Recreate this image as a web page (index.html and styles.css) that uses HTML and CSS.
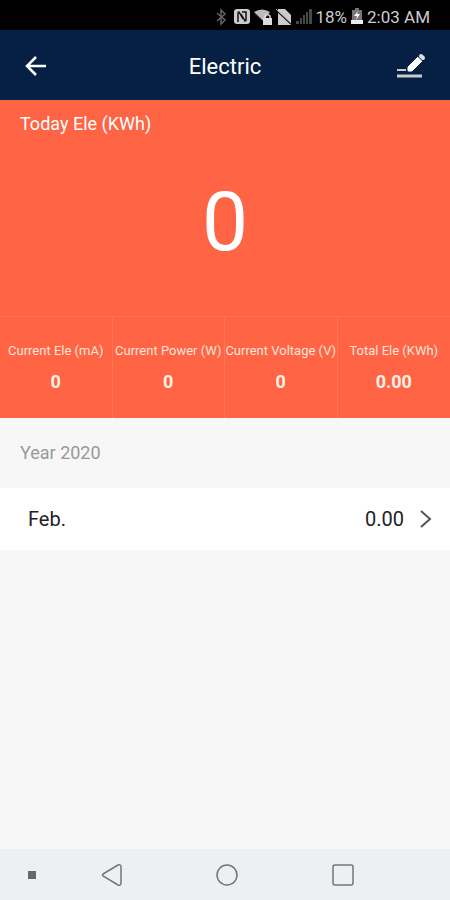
FILE: index.html
```html
<!DOCTYPE html>
<html lang="en">
<head>
<meta charset="utf-8">
<meta name="viewport" content="width=device-width, initial-scale=1">
<title>Electric</title>
<link rel="stylesheet" href="styles.css">
</head>
<body>
<div class="app">
  <div class="status">
    <svg class="bluetooth" width="12" height="18" viewBox="0 0 12 18" aria-hidden="true"><path d="M2 5l8 7-4 4V2l4 4-8 7" fill="none" stroke="#666" stroke-width="1.5"/></svg>
    <svg width="16" height="18" viewBox="0 0 16 18" aria-hidden="true"><rect x="0" y="1" width="16" height="15" rx="3" fill="#ccc"/><path d="M4 14V5q0-1 1-1l4 7M7 6l4 7q1 0 1-1V4H8" fill="none" stroke="#111" stroke-width="1.5"/></svg>
    <svg width="18" height="18" viewBox="0 0 18 18" aria-hidden="true"><path d="M0 4Q8-1 16 4L9 13z" fill="#bbb"/><path d="M1 6l8 7" stroke="#222"/><path d="M9 10h9v7H9z" fill="#ddd"/><path d="M11 10V8q2-3 5 0v2" fill="none" stroke="#ddd" stroke-width="1.5"/></svg>
    <svg width="16" height="18" viewBox="0 0 16 18" aria-hidden="true"><path d="M2 1h7l6 6v10H2z" fill="#ccc"/><path d="M1 3l14 13" stroke="#111" stroke-width="1.5"/><path d="M0 1l15 14" stroke="#bbb"/></svg>
    <svg width="16" height="18" viewBox="0 0 16 18" aria-hidden="true"><path d="M0 16h3v-3H0zM4 16h2v-6H4zM7 16h2V7H7zM10 16h2V4h-2zM13 16h3V1h-3z" fill="#484848"/></svg>
    <span>18%</span>
    <svg width="12" height="18" viewBox="0 0 12 18" aria-hidden="true"><path d="M4 0h4v2h3v10H1V2h3z" fill="#777"/><path d="M0 12h12v4H0z" fill="#eee"/><path d="M7 3L3 8h3l-1 4 4-6H6z" fill="#fff"/></svg>
    <span>2:03 AM</span>
  </div>
  <header class="bar">
    <button class="icon-btn" aria-label="Back"><svg width="22" height="22" viewBox="0 0 22 22" fill="none" stroke="#fff" stroke-width="2.5"><path d="M21 11H2M11 2l-9 9 9 9"/></svg></button>
    <h1>Electric</h1>
    <button class="icon-btn" aria-label="Edit"><svg width="30" height="26" viewBox="0 0 30 26"><path d="M1 17h9" stroke="#ccc" stroke-width="2"/><path d="M1 23h25" stroke="#ccc" stroke-width="3"/><path d="M12 18v-4L22 4l4 4-10 10z" fill="#fff" stroke="#fff" stroke-linejoin="round"/><path d="M25 3l2 2" stroke="#ddd" stroke-width="4" stroke-linecap="round"/><path d="M22 4l4 4" stroke="#8791a0" stroke-width="1"/></svg></button>
  </header>
  <section class="summary">
    <h2>Today Ele (KWh)</h2>
    <p class="today">0</p>
    <dl class="stats">
      <div><dt>Current Ele (mA)</dt><dd>0</dd></div>
      <div><dt>Current Power (W)</dt><dd>0</dd></div>
      <div><dt>Current Voltage (V)</dt><dd>0</dd></div>
      <div><dt>Total Ele (KWh)</dt><dd>0.00</dd></div>
    </dl>
  </section>
  <main>
    <h2 class="year">Year 2020</h2>
    <a class="month" href="#feb">
      <span>Feb.</span>
      <span class="amount">0.00</span>
      <svg width="12" height="18" viewBox="0 0 12 18" fill="none" stroke="#555" stroke-width="2" aria-hidden="true"><path d="M1 1l9 8-9 8"/></svg>
    </a>
  </main>
  <nav class="nav" aria-label="System">
    <button aria-label="Pin"><svg width="8" height="8" viewBox="0 0 8 8"><path d="M0 0h8v8H0z" fill="#66686b"/></svg></button>
    <button aria-label="Back"><svg width="22" height="24" viewBox="0 0 22 24"><path d="M2 11L17 2q3-1 3 2v16q0 3-3 2L2 13q-1-1 0-2z" fill="none" stroke="#737577" stroke-width="1.5"/></svg></button>
    <button aria-label="Home"><svg width="24" height="24" viewBox="0 0 24 24"><circle cx="12" cy="12" r="10" fill="none" stroke="#737577" stroke-width="1.5"/></svg></button>
    <button aria-label="Recent apps"><svg width="24" height="24" viewBox="0 0 24 24"><rect x="2" y="2" width="20" height="20" rx="2" fill="none" stroke="#737577" stroke-width="1.5"/></svg></button>
  </nav>
</div>
</body>
</html>
```
FILE: styles.css
```css
* {
  box-sizing: border-box;
  margin: 0;
}

body {
  font-family: Roboto, "Liberation Sans", sans-serif;
  background: #f7f7f7;
}

.app {
  display: flex;
  flex-direction: column;
  min-height: 100vh;
}

button {
  display: flex;
  align-items: center;
  justify-content: center;
  padding: 0;
  border: 0;
  background: none;
}

svg {
  display: block;
  flex: none;
}

.status {
  display: flex;
  align-items: center;
  justify-content: flex-end;
  gap: 4px;
  padding: 3px 20px 0;
  height: 30px;
  background: #000;
  color: #ccc;
  font-size: 17px;
}

.bluetooth {
  margin-right: 3px;
}

.bar {
  display: flex;
  align-items: center;
  justify-content: space-between;
  height: 70px;
  padding: 2px 20px 0;
  background: #052043;
  color: #fff;
}

.bar h1 {
  padding-top: 2px;
  font-size: 22px;
  font-weight: 400;
  line-height: 26px;
}

.icon-btn {
  width: 32px;
  height: 40px;
}

.bar .icon-btn:last-child {
  justify-content: flex-end;
  padding-right: 4px;
}

.summary {
  background: #ff6444;
  color: #fff;
}

.summary h2 {
  padding: 12px 20px 0;
  font-size: 18px;
  font-weight: 400;
  line-height: 24px;
}

.today {
  padding: 38px 0 46px;
  font-size: 82px;
  line-height: 96px;
  text-align: center;
}

.stats {
  display: grid;
  grid-template-columns: repeat(4, 1fr);
  border-top: 1px solid #ff7152;
  text-align: center;
  white-space: nowrap;
}

.stats div {
  min-width: 0;
  padding: 24px 0;
}

.stats div:not(:last-child) {
  border-right: 1px solid #ff7556;
}

.stats dt {
  font-size: 13px;
  line-height: 20px;
  color: #ffe4dc;
}

.stats dd {
  padding-top: 9px;
  font-size: 18px;
  font-weight: 700;
  line-height: 24px;
  color: #fff0e9;
}

main {
  flex: 1;
}

.year {
  padding: 23px 20px;
  font-size: 18px;
  font-weight: 400;
  line-height: 24px;
  color: #999;
}

.month {
  display: flex;
  align-items: center;
  gap: 16px;
  height: 62px;
  padding: 0 18px 0 28px;
  background: #fff;
  color: #222;
  font-size: 20px;
  text-decoration: none;
}

.amount {
  margin-left: auto;
}

.nav {
  display: grid;
  grid-template-columns: 12% repeat(3, 1fr) 11%;
  height: 51px;
  background: #edeff1;
}

.nav button:first-child {
  padding-left: 10px;
}
```
